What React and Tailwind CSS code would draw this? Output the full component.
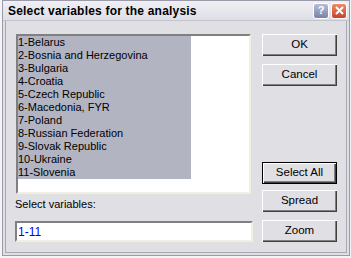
import React from 'react'

const countries = [
    '1-Belarus',
    '2-Bosnia and Herzegovina',
    '3-Bulgaria',
    '4-Croatia',
    '5-Czech Republic',
    '6-Macedonia, FYR',
    '7-Poland',
    '8-Russian Federation',
    '9-Slovak Republic',
    '10-Ukraine',
    '11-Slovenia',
];

const btn3d = 'w-[75px] h-[22px] bg-[#e0dfe3] text-[11.5px] text-black flex items-center justify-center shadow-[inset_1px_1px_0_#ffffff,inset_-1px_-1px_0_#404040,inset_-2px_-2px_0_#808080]';

function Button({ children, isDefault, className = '' }) {
    if (isDefault) {
        return (
            <div className={'w-[75px] h-[22px] border border-black ' + className}>
                <div className="w-full h-full bg-[#e0dfe3] text-[11.5px] flex items-center justify-center shadow-[inset_1px_1px_0_#ffffff,inset_-1px_-1px_0_#404040,inset_-2px_-2px_0_#808080]">
                    {children}
                </div>
            </div>
        );
    }
    return <div className={btn3d + ' ' + className}>{children}</div>;
}

function App() {
    return (
        <div className="w-[351px] h-[258px] bg-[#f4f4f6] font-['Liberation_Sans',Arial,sans-serif]">
            <div className="ml-[2px] w-[348px] h-[256px] border border-[#9a9aa8] bg-[#e0dfe3] flex flex-col">
                {/* Title bar */}
                <div className="h-[20px] flex items-center pl-[5px] pr-[2px] bg-gradient-to-b from-[#efeff4] to-[#dedee6] border-b border-[#c4c4d0]">
                    <span className="text-[12px] font-bold text-black tracking-[0.2px] flex-1">Select variables for the analysis</span>
                    <div className="w-[16px] h-[16px] rounded-[3px] border border-white bg-gradient-to-b from-[#b6bcd8] to-[#7c82a6] flex items-center justify-center text-white text-[11px] font-bold leading-none">?</div>
                    <div className="ml-[2px] w-[16px] h-[16px] rounded-[3px] border border-white bg-gradient-to-b from-[#ec8a6a] to-[#c9402a] flex items-center justify-center">
                        <svg width="9" height="9" viewBox="0 0 9 9">
                            <path d="M1 1 L8 8 M8 1 L1 8" stroke="#ffffff" strokeWidth="2" />
                        </svg>
                    </div>
                </div>

                {/* Body */}
                <div className="flex flex-1 pt-[13px] pl-[9px] mx-[2px] mb-[2px] border-x border-b border-[#a8a8b4]">
                    <div className="w-[238px] flex flex-col">
                        <div className="ml-[1px] w-[235px] h-[160px] bg-white border-2 border-t-[#808080] border-l-[#808080] border-r-[#f1efe2] border-b-[#f1efe2]">
                            <div className="w-[173px] bg-[#b3b4c2]">
                                {countries.map((c) => (
                                    <div key={c} className="h-[13px] leading-[13px] text-[11px] text-black whitespace-nowrap">
                                        {c}
                                    </div>
                                ))}
                            </div>
                        </div>
                        <div className="mt-[4px] h-[13px] leading-[13px] text-[11px] text-black">Select variables:</div>
                        <div className="mt-[10px] w-[238px] h-[21px] bg-white border-2 border-t-[#808080] border-l-[#808080] border-r-[#f1efe2] border-b-[#f1efe2] flex items-center pl-[1px]">
                            <span className="text-[12px] text-[#0000ff]">1-11</span>
                        </div>
                    </div>

                    <div className="ml-[9px] flex flex-col">
                        <Button>OK</Button>
                        <Button className="mt-[8px]">Cancel</Button>
                        <Button isDefault className="mt-[76px]">Select All</Button>
                        <Button className="mt-[6px]">Spread</Button>
                        <Button className="mt-[8px]">Zoom</Button>
                    </div>
                </div>
            </div>
        </div>
    );
}

export default App;
